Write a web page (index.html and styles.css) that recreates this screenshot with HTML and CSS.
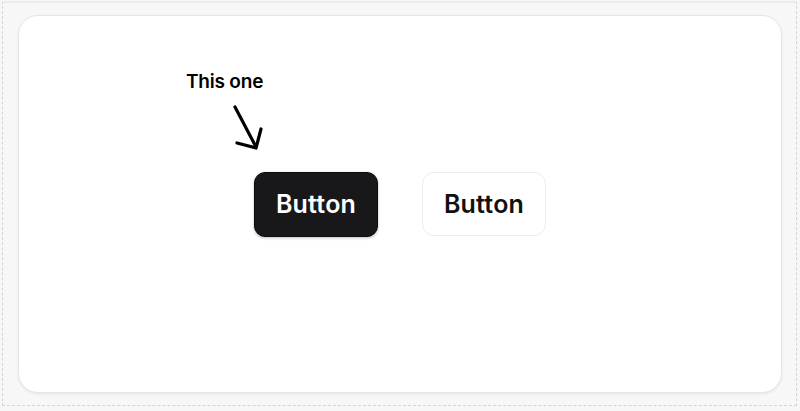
FILE: index.html
```html
<!DOCTYPE html>
<html>
<head>
<meta charset="utf-8">
<link rel="stylesheet" href="styles.css">
</head>
<body>
<div class="frame">
  <div class="card">
    <div class="row">
      <div class="slot">
        <div class="callout">
          <span class="callout-text">This one</span>
          <svg class="arrow" width="40" height="50" viewBox="0 0 40 50">
            <path d="M6 4 L26 42" fill="none" stroke="#000" stroke-width="3.2" stroke-linecap="round"/>
            <path d="M8 40 L27 45 L32 26" fill="none" stroke="#000" stroke-width="3.2" stroke-linecap="round" stroke-linejoin="round"/>
          </svg>
        </div>
        <button class="btn btn-dark">Button</button>
      </div>
      <button class="btn btn-light">Button</button>
    </div>
  </div>
</div>
</body>
</html>
```
FILE: styles.css
```css
html, body {
  margin: 0;
  padding: 0;
  background: #f7f7f7;
  font-family: Inter, "Noto Sans", sans-serif;
}
.frame {
  margin: 1px 3px 3px 2px;
  height: 405px;
  box-sizing: border-box;
  border: 1px dashed #d4d4d4;
  border-top: 2px solid #ececec;
  padding: 12px 14px 12px 15px;
}
.card {
  height: 378px;
  box-sizing: border-box;
  background: #fff;
  border: 1px solid #e6e6e6;
  border-radius: 20px;
  box-shadow: 0 1px 3px rgba(0,0,0,0.08);
  display: flex;
  align-items: center;
  justify-content: center;
}
.row {
  display: flex;
  align-items: center;
  gap: 44px;
}
.slot {
  position: relative;
}
.callout {
  position: absolute;
  left: -68px;
  top: -102px;
  width: 100px;
}
.callout-text {
  display: block;
  font-size: 19px;
  font-weight: 600;
  letter-spacing: -0.2px;
  color: #000;
  line-height: 23px;
  white-space: nowrap;
}
.arrow {
  position: absolute;
  left: 43px;
  top: 33px;
}
.btn {
  width: 124px;
  height: 65px;
  border-radius: 11px;
  font-family: Inter, "Noto Sans", sans-serif;
  font-size: 25px;
  font-weight: 600;
  letter-spacing: 0.2px;
  cursor: pointer;
  padding: 0;
}
.btn-dark {
  background: #18181a;
  color: #fff;
  border: 1px solid #0c0c0c;
  box-shadow: 0 1px 3px rgba(0,0,0,0.25);
}
.btn-light {
  background: #fff;
  color: #111;
  border: 1px solid #ececec;
  border-radius: 12px;
  height: 64px;
}
```
